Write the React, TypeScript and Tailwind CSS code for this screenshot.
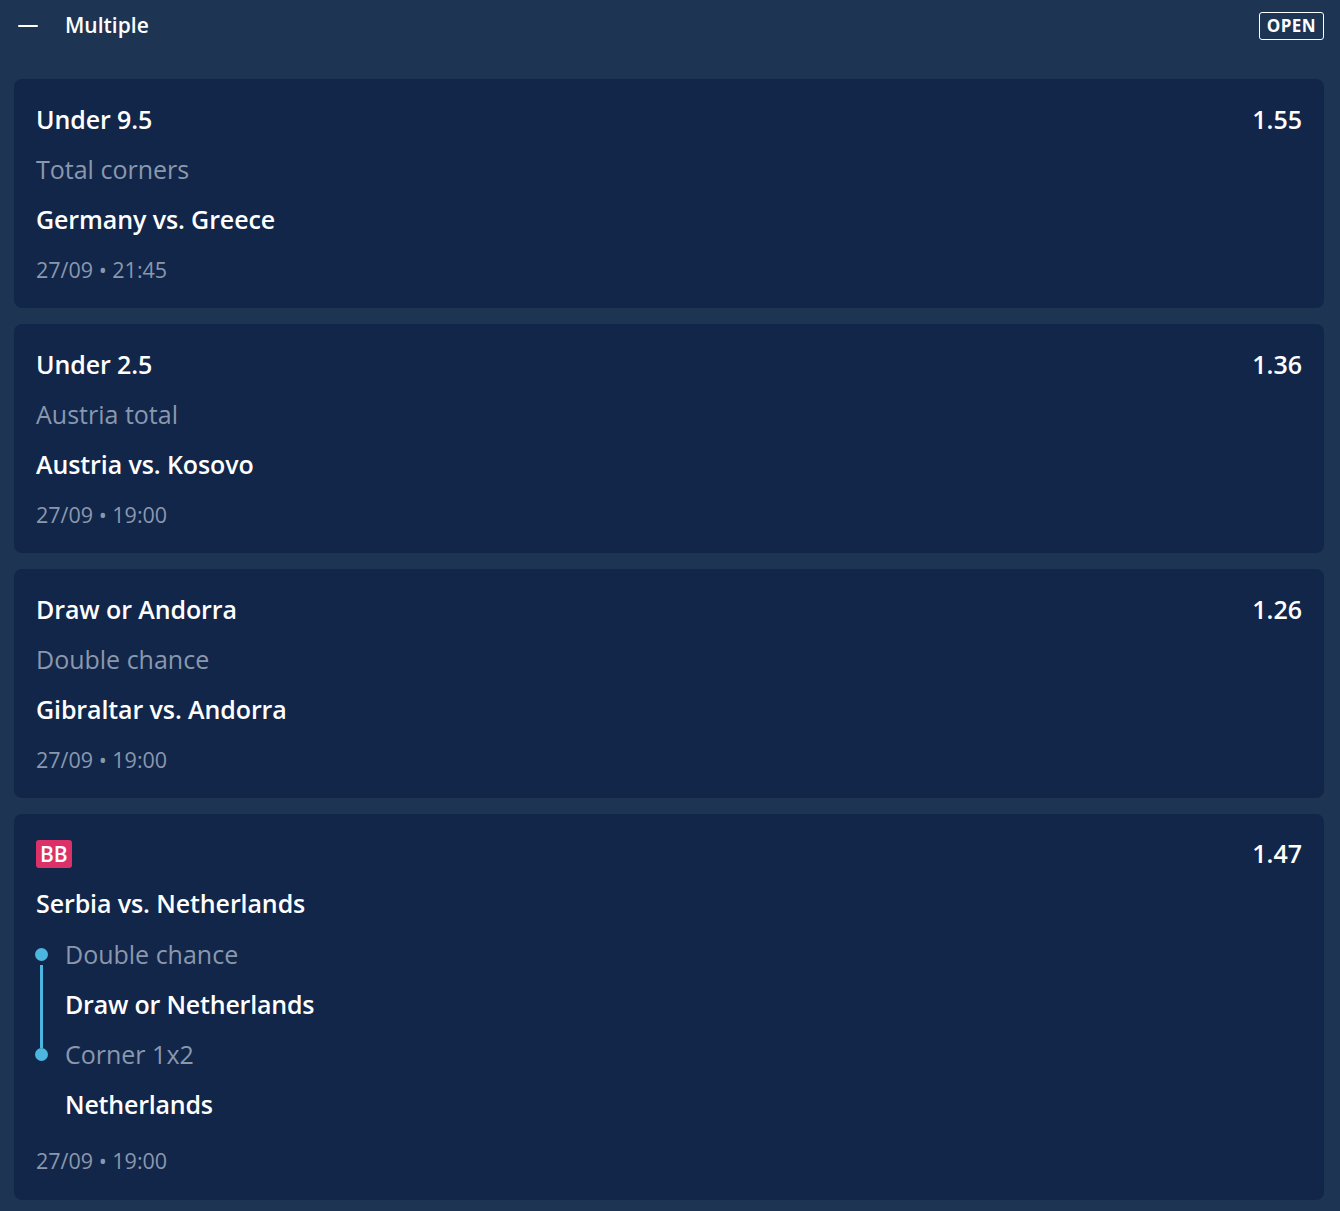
const font = { fontFamily: '"Open Sans", "Noto Sans", sans-serif' }

type Leg = { market: string; pick: string }

type Bet = {
  odds: string
  date: string
  match: string
  pick?: string
  market?: string
  legs?: Leg[]
}

const bets: Bet[] = [
  { pick: "Under 9.5", market: "Total corners", match: "Germany vs. Greece", odds: "1.55", date: "27/09 • 21:45" },
  { pick: "Under 2.5", market: "Austria total", match: "Austria vs. Kosovo", odds: "1.36", date: "27/09 • 19:00" },
  { pick: "Draw or Andorra", market: "Double chance", match: "Gibraltar vs. Andorra", odds: "1.26", date: "27/09 • 19:00" },
  {
    match: "Serbia vs. Netherlands",
    odds: "1.47",
    date: "27/09 • 19:00",
    legs: [
      { market: "Double chance", pick: "Draw or Netherlands" },
      { market: "Corner 1x2", pick: "Netherlands" },
    ],
  },
]

function SimpleCard({ bet }: { bet: Bet }) {
  return (
    <div className="rounded-lg bg-[#12264a] px-[22px] pt-4 pb-[13px]">
      <div className="flex items-center justify-between h-[50px]">
        <span className="text-[25px] font-semibold text-white tracking-[-0.1px]">{bet.pick}</span>
        <span className="text-[25px] font-semibold text-white">{bet.odds}</span>
      </div>
      <div className="flex items-center h-[50px] text-[25px] text-[#8a98ad]">{bet.market}</div>
      <div className="flex items-center h-[50px] text-[25px] font-semibold text-white tracking-[-0.1px]">{bet.match}</div>
      <div className="flex items-center h-[50px] pt-[1px] text-[21.5px] text-[#8a98ad]">{bet.date}</div>
    </div>
  )
}

function BuilderCard({ bet }: { bet: Bet }) {
  return (
    <div className="rounded-lg bg-[#12264a] px-[22px] pt-4 pb-[14px]">
      <div className="flex items-center justify-between h-[48px]">
        <span className="rounded-[3px] bg-[#dc3068] px-[4px] h-[28px] flex items-center text-[21px] font-semibold text-white leading-none">
          BB
        </span>
        <span className="text-[25px] font-semibold text-white">{bet.odds}</span>
      </div>
      <div className="flex items-center h-[52px] text-[25px] font-semibold text-white tracking-[-0.1px]">{bet.match}</div>
      <div className="flex flex-col">
        {bet.legs!.map((leg, i) => (
          <div key={leg.market} className="flex">
            <div className="w-[29px] flex flex-col items-start shrink-0">
              <div className="h-[18px]" />
              <div className="h-[13px] w-[13px] rounded-full bg-[#4cb6df] -ml-[1px]" />
              {i < bet.legs!.length - 1 ? (
                <div className="flex-1 w-[3px] bg-[#4cb6df] ml-[4px] mt-[4px] -mb-[18px]" />
              ) : null}
            </div>
            <div className="flex flex-col">
              <div className="flex items-center h-[50px] text-[25px] text-[#8a98ad]">{leg.market}</div>
              <div className="flex items-center h-[50px] text-[25px] font-semibold text-white tracking-[-0.2px]">{leg.pick}</div>
            </div>
          </div>
        ))}
      </div>
      <div className="flex items-center h-[56px] pt-[7px] text-[21.5px] text-[#8a98ad]">{bet.date}</div>
    </div>
  )
}

export default function App() {
  return (
    <div className="min-h-screen bg-[#1e3453] pl-[14px] pr-[16px] pb-[10px]" style={font}>
      <header className="flex items-center justify-between h-[51px] pl-[4px]">
        <div className="flex items-center">
          <span className="block w-[20px] h-[2px] bg-white rounded-full" />
          <span className="ml-[27px] text-[21px] font-semibold text-white">Multiple</span>
        </div>
        <span className="border border-white rounded-[3px] px-[7px] h-[28px] flex items-center text-[17px] font-bold text-white tracking-wide">
          OPEN
        </span>
      </header>
      <div className="mt-[28px] flex flex-col gap-4">
        {bets.map((b) => (b.legs ? <BuilderCard key={b.match} bet={b} /> : <SimpleCard key={b.match} bet={b} />))}
      </div>
    </div>
  )
}
